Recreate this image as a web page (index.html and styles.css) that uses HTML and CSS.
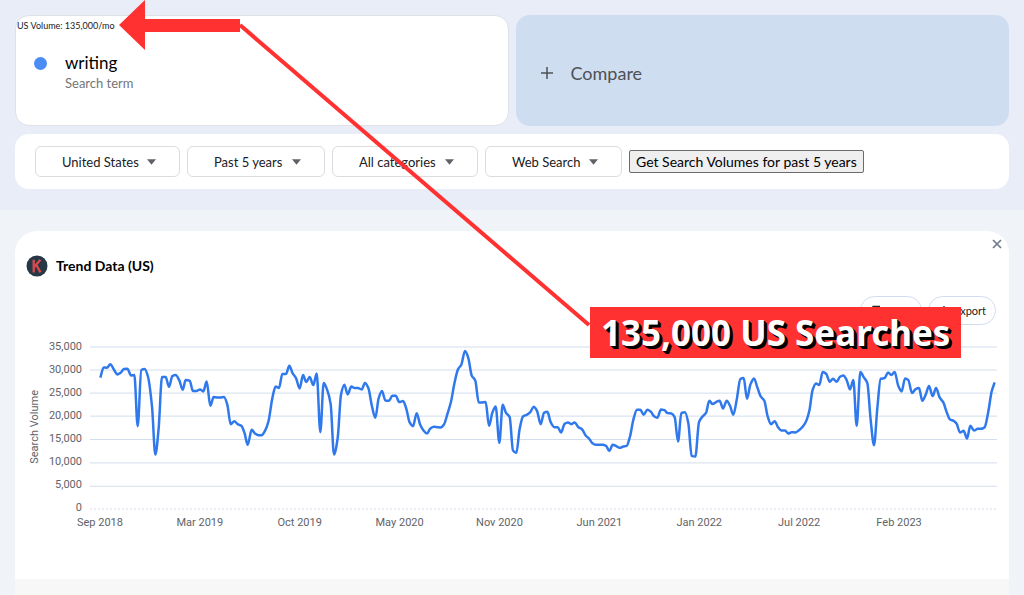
FILE: index.html
```html
<!DOCTYPE html>
<html lang="en">
<head>
<meta charset="utf-8">
<meta name="viewport" content="width=device-width, initial-scale=1">
<title>Search trends: writing</title>
<link rel="stylesheet" href="styles.css">
</head>
<body>
<header class="explore">
  <div class="terms">
    <section class="term">
      <p class="volume">US Volume: 135,000/mo</p>
      <div class="term-body">
        <span class="dot"></span>
        <div>
          <h1 class="term-name">writing</h1>
          <p class="term-kind">Search term</p>
        </div>
      </div>
    </section>
    <button class="compare" type="button">
      <svg class="plus" viewBox="0 0 14 14" aria-hidden="true"><path d="M7 1v12M1 7h12"/></svg>
      Compare
    </button>
  </div>
  <form class="filters">
    <div class="pick pick-region">
      <select aria-label="Region"><option>United States</option></select>
      <svg class="caret" viewBox="0 0 10 6" aria-hidden="true"><path d="M0 0h10L5 6z"/></svg>
    </div>
    <div class="pick pick-time">
      <select aria-label="Time range"><option>Past 5 years</option></select>
      <svg class="caret" viewBox="0 0 10 6" aria-hidden="true"><path d="M0 0h10L5 6z"/></svg>
    </div>
    <div class="pick pick-category">
      <select aria-label="Category"><option>All categories</option></select>
      <svg class="caret" viewBox="0 0 10 6" aria-hidden="true"><path d="M0 0h10L5 6z"/></svg>
    </div>
    <div class="pick pick-source">
      <select aria-label="Search type"><option>Web Search</option></select>
      <svg class="caret" viewBox="0 0 10 6" aria-hidden="true"><path d="M0 0h10L5 6z"/></svg>
    </div>
    <button class="get-volumes" type="button">Get Search Volumes for past 5 years</button>
  </form>
</header>

<main class="trend">
  <div class="trend-head">
    <svg class="logo" viewBox="0 0 22 22" aria-hidden="true">
      <circle cx="11" cy="11" r="10.5" fill="#263746"/>
      <path d="M7.700 4.800v12.600M14.400 4.800L8.200 12M10.200 9.800l4.300 7.600" fill="none" stroke="#d94a4c" stroke-width="2.3"/>
    </svg>
    <h2 class="trend-title">Trend Data (US)</h2>
    <button class="close" type="button" aria-label="Close">
      <svg viewBox="0 0 10 10" aria-hidden="true"><path d="M1 1l8 8M9 1L1 9"/></svg>
    </button>
  </div>
  <div class="actions">
    <button class="action" type="button">
      <svg viewBox="0 0 12 12" aria-hidden="true"><path d="M3 9V1.500h7M5 4h6v7.500H5z"/></svg>Copy
    </button>
    <button class="action" type="button">
      <svg viewBox="0 0 12 12" aria-hidden="true"><path d="M6 1v7M3 5l3 3 3-3M1 9v2h10V9"/></svg>Export
    </button>
  </div>
  <div class="chart">
    <span class="axis-title">Search Volume</span>
    <ol class="y-axis">
      <li>35,000</li><li>30,000</li><li>25,000</li><li>20,000</li><li>15,000</li><li>10,000</li><li>5,000</li><li>0</li>
    </ol>
    <svg class="plot" viewBox="270 37 2721 485" preserveAspectRatio="none" role="img" aria-label="Search volume from September 2018 to 2023">
      <path class="grid" d="M270 37H2991M270 106H2991M270 175H2991M270 244H2991M270 314H2991M270 384H2991M270 454H2991"/>
      <path class="base" d="M270 522H2991"/>
      <path class="series" id="series"/>
    </svg>
    <ol class="x-axis">
      <li>Sep 2018</li><li>Mar 2019</li><li>Oct 2019</li><li>May 2020</li><li>Nov 2020</li><li>Jun 2021</li><li>Jan 2022</li><li>Jul 2022</li><li>Feb 2023</li>
    </ol>
  </div>
  <div class="trend-foot"></div>
</main>

<svg class="pointer" viewBox="0 0 600 340" aria-hidden="true">
  <path d="M119 25L145 0V19H240V32H145V50z" fill="#ff3131"/>
  <path d="M240 25L589 325" fill="none" stroke="#ff3131" stroke-width="4"/>
</svg>
<strong class="callout">135,000 US Searches</strong>
<script src="chart.js"></script>
</body>
</html>
```

FILE: styles.css
```css
* { box-sizing: border-box; }

body {
  position: relative;
  display: flex;
  flex-direction: column;
  min-height: 100vh;
  margin: 0;
  background: #f0f3f8;
  color: #202124;
  font-family: Lato, "Liberation Sans", sans-serif;
}

h1, h2, p, ol { margin: 0; padding: 0; font-weight: 400; }
ol { list-style: none; }
button, select { font: inherit; color: inherit; }

.explore {
  display: flex;
  flex-direction: column;
  gap: 8px;
  padding: 15px 15px 21px;
  background: #e8edf7;
}

.terms { display: grid; grid-template-columns: 1fr 1fr; gap: 7px; }

.term {
  height: 111px;
  border: 1px solid #dfe1e6;
  border-radius: 14px;
  background: #fff;
}
.volume { padding: 4px 0 0 1px; font-size: 9px; line-height: 12px; }
.term-body { display: flex; gap: 18px; padding: 20px 0 0 18px; }
.dot { width: 13px; height: 13px; margin-top: 5px; border-radius: 50%; background: #4a8bf5; }
.term-name { color: #000; font-size: 17px; line-height: 22px; }
.term-kind { color: #757575; font-size: 13px; line-height: 18px; }

.compare {
  display: flex;
  align-items: center;
  gap: 17px;
  padding: 4px 24px 0;
  border: 0;
  border-radius: 14px;
  background: #cfddf1;
  color: #4d5156;
  font-size: 18px;
}
.plus { width: 14px; height: 14px; fill: none; stroke: #4d5156; stroke-width: 1.5; }

.filters {
  display: flex;
  align-items: center;
  gap: 7px;
  padding: 12px 20px;
  border-radius: 14px;
  background: #fff;
}
.pick { position: relative; }
.pick-region { width: 145px; }
.pick-time { width: 138px; }
.pick-category { width: 146px; }
.pick-source { width: 137px; }
.pick select {
  display: block;
  width: 100%;
  height: 31px;
  padding: 0 36px 0 26px;
  border: 1px solid #dadce0;
  border-radius: 6px;
  background: #fff;
  appearance: none;
  font-size: 13px;
}
.caret { position: absolute; top: 13px; right: 24px; width: 9px; height: 6px; fill: #5f6368; pointer-events: none; }
.get-volumes {
  height: 23px;
  padding: 0 6px;
  border: 1px solid #6b6b6b;
  border-radius: 2px;
  background: #efefef;
  color: #000;
  font-size: 14px;
  white-space: nowrap;
}

.trend {
  display: flex;
  flex: 1;
  flex-direction: column;
  margin: 21px 15px 0;
  border-radius: 22px 22px 0 0;
  background: #fff;
}
.trend-head { display: flex; align-items: center; padding: 8px 7px 0 11px; }
.logo { width: 22px; height: 22px; margin-top: 16px; }
.trend-title { flex: 1; margin: 16px 0 0 8px; color: #000; font-size: 14px; font-weight: 700; line-height: 22px; }
.close { align-self: flex-start; display: flex; padding: 0; border: 0; background: none; }
.close svg { width: 10px; height: 10px; fill: none; stroke: #6f7a8c; stroke-width: 1.7; }

.actions { display: flex; justify-content: flex-end; gap: 6px; padding: 19px 13px 0; }
.action {
  display: flex;
  align-items: center;
  justify-content: center;
  gap: 4px;
  min-width: 62px;
  height: 29px;
  padding: 0 9px;
  border: 1px solid #d3dcee;
  border-radius: 15px;
  background: #fff;
  font-size: 11px;
}
.action svg { width: 12px; height: 12px; fill: none; stroke: #202124; stroke-width: 1.3; }

.chart {
  display: grid;
  grid-template-columns: 12px 38px 1fr;
  column-gap: 3px;
  margin: 10px 12px 45px 14px;
  color: #5f6368;
  font: 11px/23px Roboto, "Liberation Sans", sans-serif;
}
.axis-title {
  align-self: center;
  justify-self: center;
  line-height: 12px;
  white-space: nowrap;
  writing-mode: vertical-rl;
  transform: rotate(180deg);
}
.y-axis { text-align: right; }
.plot { display: block; width: calc(100% - 5px); height: 162px; margin: 12px 0 0 5px; overflow: visible; }
.plot path { fill: none; vector-effect: non-scaling-stroke; }
.plot .grid { stroke: #d3deec; stroke-width: 1; shape-rendering: crispEdges; }
.plot .base { stroke: #d5dbe6; stroke-width: 1; stroke-dasharray: 2 2; }
.plot .series { stroke: #3079ed; stroke-width: 2.5; stroke-linejoin: round; }
.x-axis {
  display: grid;
  grid-column: 3;
  grid-template-columns: repeat(9, 1fr);
  margin: -8px 48px 0 -35px;
  text-align: center;
}
.trend-foot { flex: 1; min-height: 16px; background: #f7f7f7; }

.pointer { position: absolute; top: 0; left: 0; width: 600px; height: 340px; pointer-events: none; }
.callout {
  position: absolute;
  top: 307px;
  left: 590px;
  padding: 0 11px;
  background: #ff3131;
  color: #fff;
  font: 700 35px/51px "Noto Sans", "Open Sans", sans-serif;
  text-shadow: 1px 1px #000, 2px 2px #000, 3px 3px #000;
  white-space: nowrap;
}
```

FILE: chart.js
```js
// Weekly samples as "x,y" pairs in the plot's viewBox units.
const samples = `
301,129 311,98 321,99 331,89 342,105 352,119 362,114 372,103 382,102 393,122 403,121 413,274 424,106 434,103 444,126
456,215 466,359 476,280 486,127 497,127 507,156 517,124 527,121 538,137 548,165 557,136 569,138 579,169 589,169 600,164
610,170 620,140 631,213 641,187 651,188 662,188 672,187 682,210 692,268 703,259 713,268 724,273 734,296 743,330 755,285
765,296 775,301 785,301 796,286 806,257 817,190 827,155 837,160 847,118 858,118 868,93 878,116 888,130 899,161 909,121
919,142 929,127 940,151 950,116 961,292 971,145 981,164 992,208 1002,359 1013,310 1023,180 1033,150 1043,179 1054,155
1064,160 1074,160 1085,164 1095,145 1105,160 1116,215 1126,249 1136,190 1146,169 1156,197 1167,198 1177,183 1187,183
1198,202 1209,199 1219,222 1229,263 1239,274 1250,235 1260,268 1270,286 1281,296 1291,281 1302,276 1312,277 1322,278
1332,269 1343,235 1353,201 1363,147 1374,104 1384,90 1395,49 1405,70 1415,122 1426,138 1436,203 1446,203 1457,202
1467,273 1477,234 1487,215 1498,324 1508,210 1518,234 1529,247 1539,347 1549,354 1559,282 1569,245 1580,240 1591,232
1601,216 1611,228 1622,268 1632,234 1642,231 1652,262 1663,277 1673,277 1683,293 1694,267 1704,263 1714,268 1724,263
1735,277 1746,283 1757,302 1767,311 1777,325 1787,330 1798,330 1808,330 1818,333 1828,348 1838,330 1849,334 1859,339
1870,335 1880,333 1890,305 1900,255 1911,225 1921,225 1931,240 1942,225 1952,230 1962,244 1972,249 1983,224 1993,226
2003,235 2014,236 2024,247 2034,320 2044,235 2055,232 2065,265 2075,363 2086,365 2097,262 2107,246 2118,234 2128,198
2138,208 2148,202 2159,198 2169,221 2180,198 2190,213 2200,240 2210,196 2221,133 2231,130 2241,192 2251,150 2262,131
2272,158 2282,185 2293,198 2303,245 2313,268 2324,259 2334,277 2344,287 2355,287 2365,296 2375,292 2386,293 2396,287
2407,277 2418,260 2428,228 2438,165 2448,146 2458,151 2468,112 2479,118 2489,141 2499,132 2510,141 2520,126 2530,122
2540,136 2550,164 2560,136 2570,273 2581,112 2591,127 2602,145 2612,255 2622,331 2632,220 2642,132 2654,130 2664,113
2674,121 2684,112 2695,154 2705,170 2715,131 2725,136 2736,175 2746,164 2757,160 2767,198 2777,180 2787,154 2798,184
2808,160 2819,188 2830,203 2840,232 2850,254 2861,258 2870,267 2880,293 2891,288 2901,311 2911,273 2922,287 2933,282
2943,282 2954,277 2965,230 2975,170 2984,143`
  .trim().split(/\s+/).map(pair => pair.split(",").map(Number));

// Monotone cubic tangents keep the curve from overshooting its samples.
const slope = (a, b) => (b[1] - a[1]) / (b[0] - a[0]);
const tangents = samples.map((point, i) => {
  if (i === 0) return slope(point, samples[1]);
  if (i === samples.length - 1) return slope(samples[i - 1], point);
  const before = slope(samples[i - 1], point);
  const after = slope(point, samples[i + 1]);
  return before * after <= 0 ? 0 : 2 * before * after / (before + after);
});

let d = "M" + samples[0];
for (let i = 1; i < samples.length; i++) {
  const [x0, y0] = samples[i - 1];
  const [x1, y1] = samples[i];
  const third = (x1 - x0) / 3;
  d += `C${x0 + third},${y0 + tangents[i - 1] * third} ${x1 - third},${y1 - tangents[i] * third} ${x1},${y1}`;
}
document.getElementById("series").setAttribute("d", d);
```
